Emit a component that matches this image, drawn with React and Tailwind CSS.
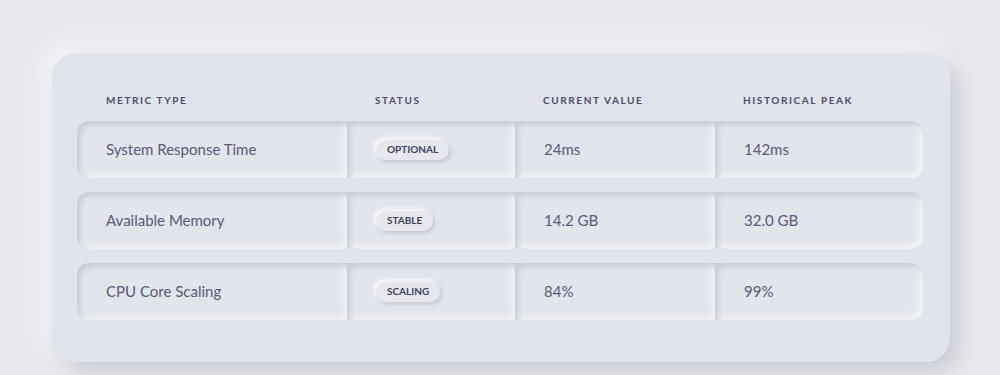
import React from "react";

const rows = [
  { name: "System Response Time", status: "OPTIONAL", current: "24ms", peak: "142ms" },
  { name: "Available Memory", status: "STABLE", current: "14.2 GB", peak: "32.0 GB" },
  { name: "CPU Core Scaling", status: "SCALING", current: "84%", peak: "99%" },
];

const cols = "grid grid-cols-[270px_168px_200px_208px]";
const cell =
  "h-[57px] flex items-center pl-[29px] bg-[#e2e5eb] shadow-[inset_3px_3px_6px_#c6cad3,inset_-3px_-3px_6px_#f7f8fa]";

export default function App() {
  return (
    <div
      className="w-[1000px] h-[375px] bg-[#e9eaee] overflow-hidden pt-[53px] pl-[52px]"
      style={{ fontFamily: "Lato, 'Noto Sans', sans-serif" }}
    >
      <div className="w-[898px] h-[309px] rounded-[24px] bg-[#e1e4ea] shadow-[10px_10px_24px_#c9ccd3,-8px_-8px_20px_#f5f6f8] pt-[36px] pl-[25px]">
        <div className={`${cols} h-[22px] items-center text-[10px] font-bold tracking-[1.6px] text-[#4b4d6b]`}>
          <div className="pl-[29px]">METRIC TYPE</div>
          <div className="pl-[28px]">STATUS</div>
          <div className="pl-[28px]">CURRENT VALUE</div>
          <div className="pl-[28px]">HISTORICAL PEAK</div>
        </div>
        <div className="mt-[10px] flex flex-col gap-[14px]">
          {rows.map((r) => (
            <div key={r.name} className={`${cols} text-[15px] text-[#585a77]`}>
              <div className={`${cell} rounded-l-[12px]`}>{r.name}</div>
              <div className={`${cell} pl-[27px]`}>
                <span className="h-[20px] px-[11px] rounded-full bg-[#e6e8ee] shadow-[2px_2px_4px_#c3c7cf,-2px_-2px_4px_#ffffff] flex items-center text-[10px] font-bold text-[#3f4160]">
                  {r.status}
                </span>
              </div>
              <div className={`${cell} pl-[28px]`}>{r.current}</div>
              <div className={`${cell} pl-[28px] rounded-r-[12px]`}>{r.peak}</div>
            </div>
          ))}
        </div>
      </div>
    </div>
  );
}
